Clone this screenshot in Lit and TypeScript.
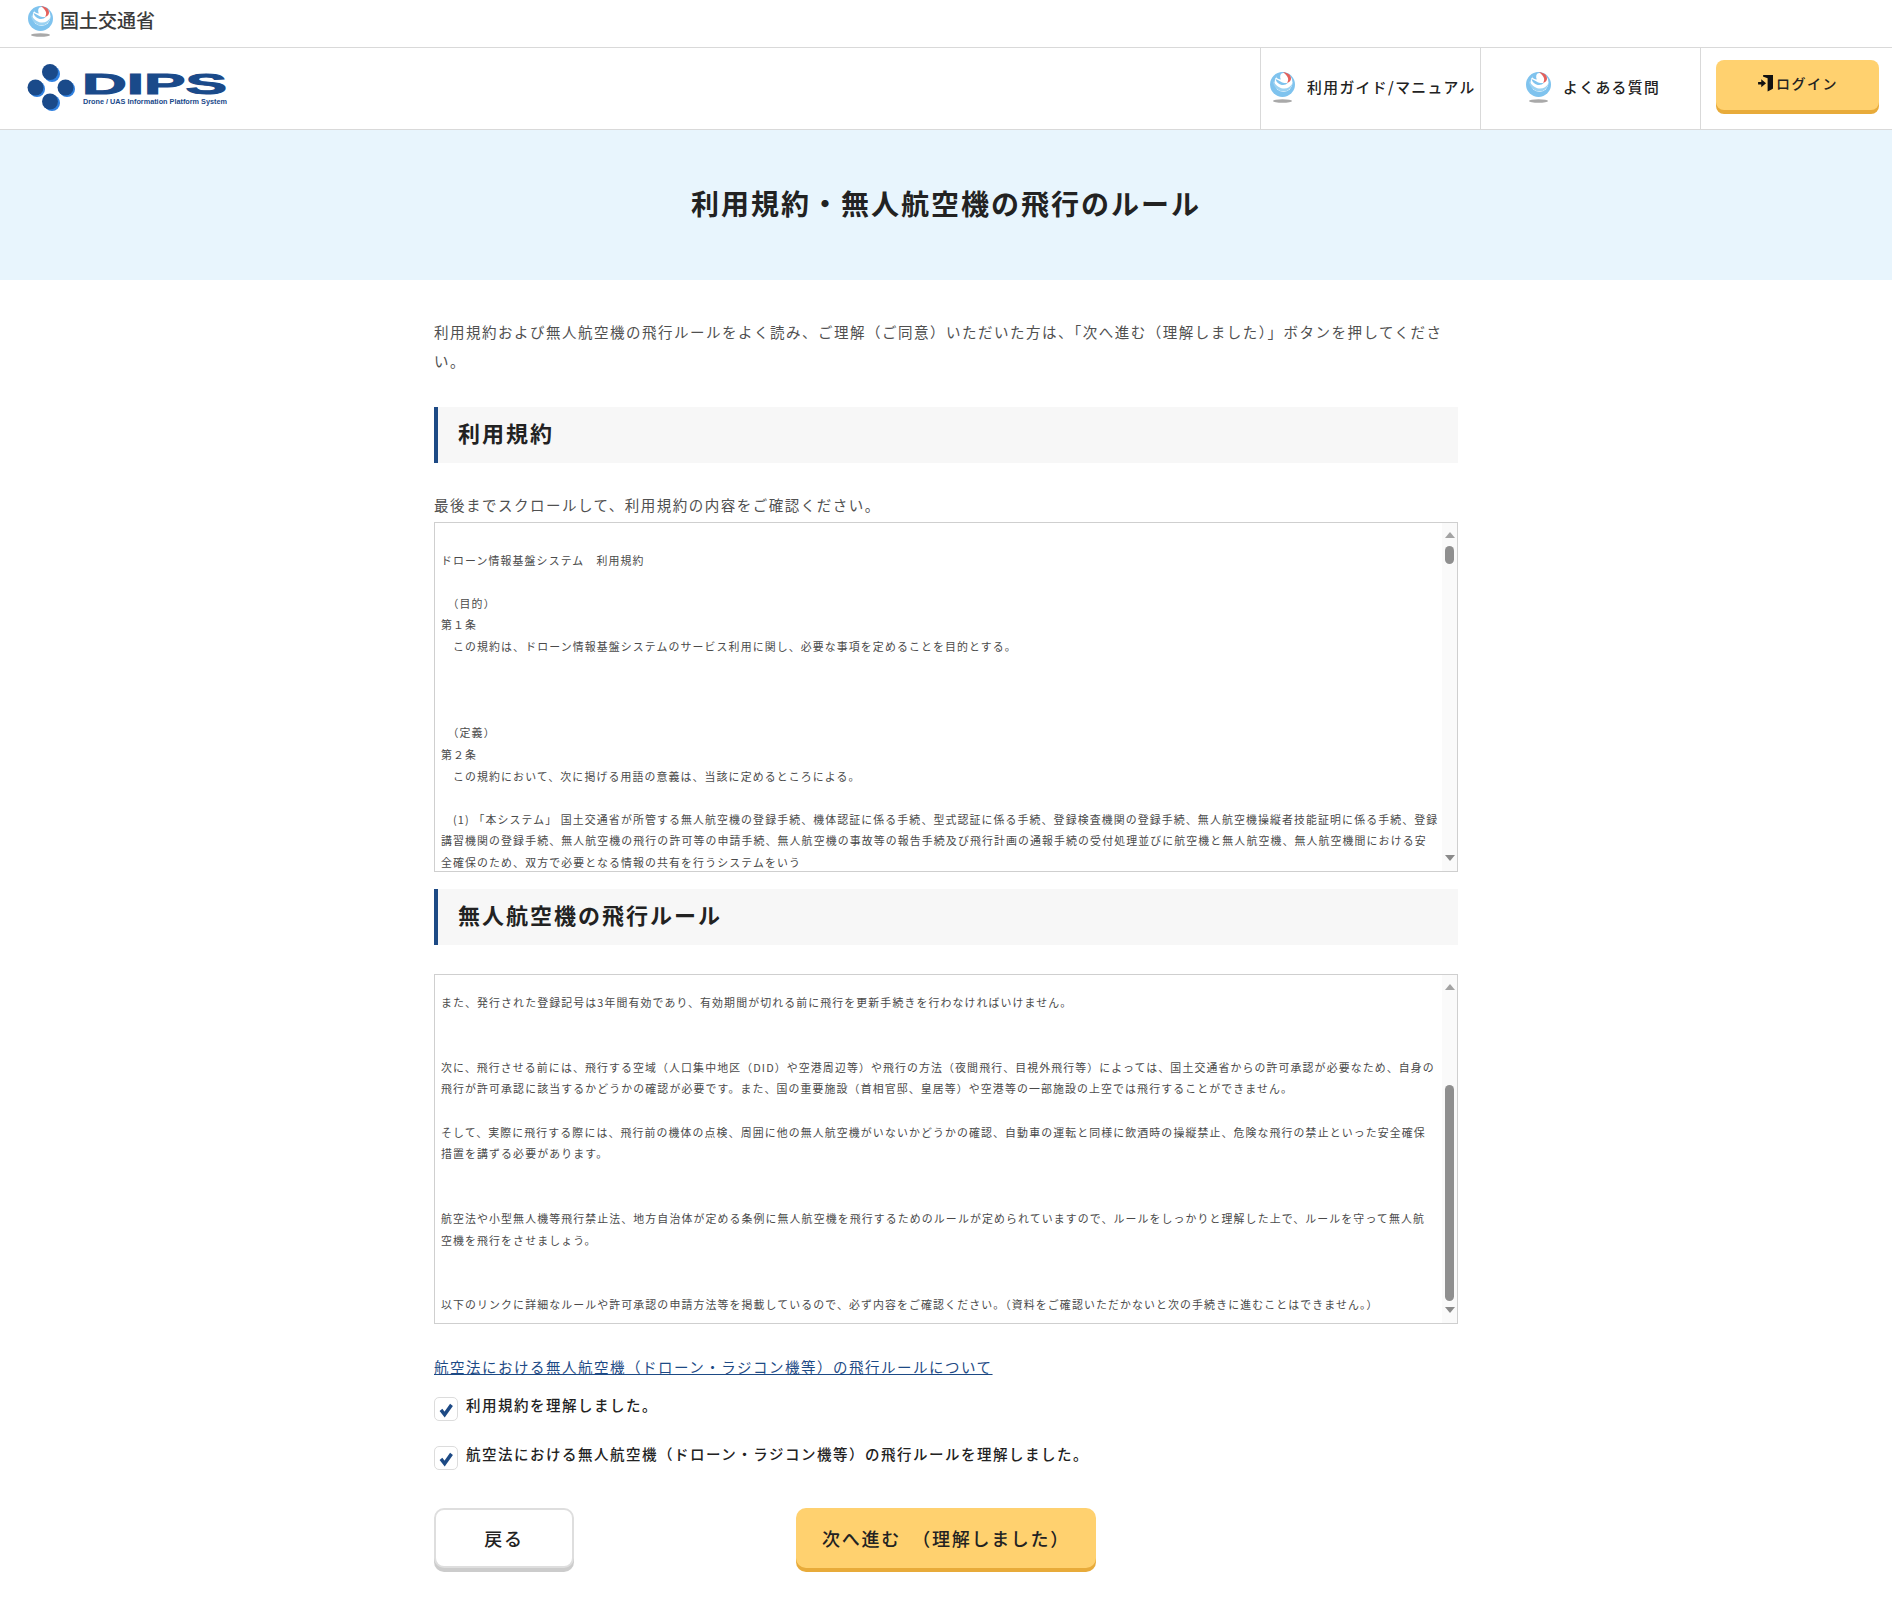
import { LitElement, html, css, svg } from "lit";
import { customElement } from "lit/decorators.js";

const TERMS = [
  "",
  "ドローン情報基盤システム　利用規約",
  "",
  "　（目的）",
  "第１条",
  "　この規約は、ドローン情報基盤システムのサービス利用に関し、必要な事項を定めることを目的とする。",
  "",
  "",
  "",
  "　（定義）",
  "第２条",
  "　この規約において、次に掲げる用語の意義は、当該に定めるところによる。",
  "",
  "　(1) 「本システム」 国土交通省が所管する無人航空機の登録手続、機体認証に係る手続、型式認証に係る手続、登録検査機関の登録手続、無人航空機操縦者技能証明に係る手続、登録",
  "講習機関の登録手続、無人航空機の飛行の許可等の申請手続、無人航空機の事故等の報告手続及び飛行計画の通報手続の受付処理並びに航空機と無人航空機、無人航空機間における安",
  "全確保のため、双方で必要となる情報の共有を行うシステムをいう",
];

const RULES = [
  "また、発行された登録記号は3年間有効であり、有効期間が切れる前に飛行を更新手続きを行わなければいけません。",
  "",
  "",
  "次に、飛行させる前には、飛行する空域（人口集中地区（DID）や空港周辺等）や飛行の方法（夜間飛行、目視外飛行等）によっては、国土交通省からの許可承認が必要なため、自身の",
  "飛行が許可承認に該当するかどうかの確認が必要です。また、国の重要施設（首相官邸、皇居等）や空港等の一部施設の上空では飛行することができません。",
  "",
  "そして、実際に飛行する際には、飛行前の機体の点検、周囲に他の無人航空機がいないかどうかの確認、自動車の運転と同様に飲酒時の操縦禁止、危険な飛行の禁止といった安全確保",
  "措置を講ずる必要があります。",
  "",
  "",
  "航空法や小型無人機等飛行禁止法、地方自治体が定める条例に無人航空機を飛行するためのルールが定められていますので、ルールをしっかりと理解した上で、ルールを守って無人航",
  "空機を飛行をさせましょう。",
  "",
  "",
  "以下のリンクに詳細なルールや許可承認の申請方法等を掲載しているので、必ず内容をご確認ください。（資料をご確認いただかないと次の手続きに進むことはできません。）",
];

const mlit = () => html`<svg class="mlit" viewBox="0 0 27 31" aria-hidden="true">
  ${svg`
  <circle cx="13.5" cy="12.5" r="12.5" fill="#7fc3ee"/>
  <ellipse cx="14.5" cy="10.5" rx="9" ry="9.5" fill="#fff"/>
  <path d="M3.5 8C4.5 15.5 9.5 19.5 14.5 19.5C19 19.5 22.5 16 23.5 11.5C21.5 15 18 17 14 16.5C9.5 16 6 12.5 3.5 8Z" fill="#9bd2f2"/>
  <path d="M6.5 7C7.5 10.5 10.5 13 14 13C16 13 17.5 12.3 18.8 11C16 11.3 13.5 11 11.5 9.5C9.5 8.5 8 7.5 6.5 7Z" fill="#7fc3ee"/>
  <path d="M14 0.3C18 0.3 21.5 2.5 22 6C22.3 8.5 20.5 10.5 18 11C19.3 9.2 19.6 7 18.5 5C17.5 3.2 16 1.5 14 0.3Z" fill="#e4605c"/>
  <path d="M7 5C8 2.5 10.5 .8 13.5 .3C11.2 2.2 10.5 4.8 11.8 7.5C9.8 7.5 8 6.5 7 5Z" fill="#7fc3ee"/>
  <ellipse cx="13.5" cy="29" rx="9.5" ry="1.8" fill="#a9a9a9"/>
  `}
</svg>`;

const check = () => html`<span class="check"><svg viewBox="0 0 24 23" aria-hidden="true">
  ${svg`<path d="M6.5 12.5L10.5 17.5L18 7" fill="none" stroke="#1d4a85" stroke-width="3.8"/>`}
</svg></span>`;

const scrollbar = (top: number, height: number) => html`<div class="bar">
  <svg class="arrow up" viewBox="0 0 10 6">${svg`<path d="M5 0L10 6H0Z" fill="#a3a3a3"/>`}</svg>
  <span class="thumb" style="top:${top}px;height:${height}px"></span>
  <svg class="arrow down" viewBox="0 0 10 6">${svg`<path d="M0 0H10L5 6Z" fill="#8a8a8a"/>`}</svg>
</div>`;

@customElement("app-root")
export class AppRoot extends LitElement {
  static styles = css`
    :host {
      display: block;
      font-family: "Noto Sans CJK JP", sans-serif;
      color: #444;
      background: #fff;
      height: 1616px;
      overflow: hidden;
    }
    .mlit { display: block; width: 27px; height: 31px; flex: none; }
    .ministry {
      height: 47px;
      border-bottom: 1px solid #d9d9d9;
      display: flex;
      align-items: flex-start;
      padding-left: 27px;
      gap: 6px;
    }
    .ministry .mlit { margin-top: 6px; }
    .ministry span {
      font-size: 19px;
      line-height: 40px;
      color: #3a3a3a;
      font-weight: 500;
    }
    .header {
      height: 81px;
      border-bottom: 1px solid #d9d9d9;
      display: flex;
      align-items: stretch;
    }
    .logo { display: block; width: 240px; height: 81px; margin-left: 20px; flex: none; }
    .nav { margin-left: auto; display: flex; align-items: stretch; }
    .nav-item {
      width: 220px;
      box-sizing: border-box;
      border-left: 1px solid #d9d9d9;
      display: flex;
      align-items: center;
      font-size: 14.8px;
      letter-spacing: 1.4px;
      font-weight: 500;
      color: #222;
      white-space: nowrap;
    }
    .nav-item.a { padding-left: 8px; gap: 11px; }
    .nav-item.b { padding-left: 44px; gap: 11px; }
    .nav-item .mlit { margin-top: -2px; }
    .nav-item span { margin-top: -5px; }
    .login-cell {
      width: 192px;
      border-left: 1px solid #d9d9d9;
      box-sizing: border-box;
      padding: 12px 13px 0 15px;
    }
    .login {
      height: 50px;
      border-radius: 8px;
      background: #ffd16f;
      box-shadow: 0 4px 0 #e8ab3a;
      display: flex;
      align-items: center;
      justify-content: center;
      gap: 2px;
      font-size: 14px;
      letter-spacing: 1.5px;
      font-weight: 500;
      color: #222;
      padding: 0 0 4px 0;
      box-sizing: border-box;
    }
    .login svg { width: 17px; height: 18px; display: block; }
    .hero {
      height: 150px;
      background: #e8f5fd;
      display: flex;
      align-items: center;
      justify-content: center;
    }
    .hero h1 {
      margin: 0 0 4px;
      font-size: 28px;
      letter-spacing: 2px;
      font-weight: 700;
      color: #222;
    }
    .main { width: 1024px; margin: 0 auto; }
    .p {
      margin: 0;
      font-size: 14.5px;
      letter-spacing: 1.5px;
      line-height: 29px;
      color: #505050;
    }
    .intro { padding-top: 37px; }
    .sec {
      height: 56px;
      box-sizing: border-box;
      border-left: 4px solid #1d4a85;
      background: #f7f7f7;
      padding: 0 0 7px 20px;
      display: flex;
      align-items: center;
      margin: 0;
      font-size: 22px;
      letter-spacing: 2px;
      font-weight: 700;
      color: #222;
    }
    .sec.first { margin-top: 32px; }
    .sec.second { margin-top: 17px; }
    .note { margin-top: 27px; margin-bottom: 3px; }
    .box {
      position: relative;
      height: 350px;
      box-sizing: border-box;
      border: 1px solid #cfcfcf;
      overflow: hidden;
      padding: 5px 0 0 6px;
    }
    .box.rules { margin-top: 29px; padding-top: 17px; }
    .line {
      height: 21.6px;
      line-height: 21.6px;
      font-size: 10.9px;
      letter-spacing: 1.13px;
      white-space: pre;
      color: #4a4a4a;
    }
    .bar {
      position: absolute;
      top: 0;
      right: 0;
      bottom: 0;
      width: 15px;
      background: #fafafa;
    }
    .arrow { position: absolute; left: 2.5px; width: 10px; height: 6px; display: block; }
    .arrow.up { top: 9px; }
    .arrow.down { bottom: 10px; }
    .thumb {
      position: absolute;
      left: 3px;
      width: 9px;
      border-radius: 5px;
      background: #8f8f8f;
    }
    .link {
      display: block;
      margin-top: 28px;
      font-size: 14.5px;
      letter-spacing: 1.5px;
      line-height: 29px;
      color: #1d4a85;
      text-decoration: underline;
    }
    .opts { margin-top: 16px; display: flex; flex-direction: column; gap: 25px; }
    .opt {
      display: flex;
      align-items: flex-start;
      gap: 8px;
      height: 24px;
      font-size: 14.5px;
      letter-spacing: 1.5px;
      font-weight: 500;
      color: #222;
      line-height: 16px;
    }
    .check {
      width: 24px;
      height: 24px;
      box-sizing: border-box;
      border: 1px solid #dcdcdc;
      border-radius: 5px;
      background: #fff;
      flex: none;
      display: block;
    }
    .check svg { display: block; width: 22px; height: 22px; }
    .actions { margin-top: 38px; display: flex; gap: 222px; }
    .btn {
      height: 60px;
      border-radius: 10px;
      display: flex;
      align-items: center;
      justify-content: center;
      box-sizing: border-box;
      font-size: 18px;
      letter-spacing: 1.7px;
      font-weight: 500;
      color: #222;
      white-space: pre;
    }
    .back {
      width: 140px;
      background: #fff;
      border: 2px solid #dedede;
      box-shadow: 0 4px 0 #cccccc;
    }
    .next {
      width: 300px;
      background: #ffd16f;
      box-shadow: 0 4px 0 #e8ab3a;
    }
  `;

  render() {
    return html`
      <div class="ministry">${mlit()}<span>国土交通省</span></div>
      <header class="header">
        <svg class="logo" viewBox="0 0 240 81" role="img" aria-label="DIPS">
          ${svg`
          <circle cx="32" cy="26" r="8" fill="#2f80e0"/>
          <circle cx="17" cy="41" r="8" fill="#2f80e0"/>
          <circle cx="47" cy="41" r="8" fill="#2f80e0"/>
          <circle cx="32" cy="55" r="8" fill="#2f80e0"/>
          <circle cx="30" cy="24" r="8" fill="#1a4a8a"/>
          <circle cx="15.5" cy="39.5" r="8" fill="#1a4a8a"/>
          <circle cx="45.5" cy="39.5" r="8" fill="#1a4a8a"/>
          <circle cx="30" cy="53.5" r="8" fill="#1a4a8a"/>
          <text x="62" y="46" font-family="Liberation Sans" font-weight="700" font-size="30" fill="#1a4a8a" stroke="#1a4a8a" stroke-width="1" textLength="145" lengthAdjust="spacingAndGlyphs">DIPS</text>
          <text x="63" y="56" font-family="Liberation Sans" font-weight="700" font-size="6.6" fill="#1a4a8a" textLength="144" lengthAdjust="spacingAndGlyphs">Drone / UAS Information Platform System</text>
          `}
        </svg>
        <nav class="nav">
          <div class="nav-item a">${mlit()}<span>利用ガイド/マニュアル</span></div>
          <div class="nav-item b">${mlit()}<span>よくある質問</span></div>
          <div class="login-cell">
            <div class="login">
              <svg viewBox="0 0 16 17" aria-hidden="true">
                ${svg`
                <path d="M6 1H15V14L10 16.5V4L6 2.5Z" fill="#111"/>
                <path d="M6 1H15V13H13.5V2.5H6Z" fill="#111"/>
                <path d="M1 7.5H4V5L8.5 8.8L4 12.5V10H1Z" fill="#111"/>
                `}
              </svg>
              <span>ログイン</span>
            </div>
          </div>
        </nav>
      </header>
      <section class="hero"><h1>利用規約・無人航空機の飛行のルール</h1></section>
      <main class="main">
        <p class="p intro">利用規約および無人航空機の飛行ルールをよく読み、ご理解（ご同意）いただいた方は、「次へ進む（理解しました）」ボタンを押してくださ<br />い。</p>
        <h2 class="sec first">利用規約</h2>
        <p class="p note">最後までスクロールして、利用規約の内容をご確認ください。</p>
        <div class="box">
          ${TERMS.map((l) => html`<div class="line">${l}</div>`)}
          ${scrollbar(23, 18)}
        </div>
        <h2 class="sec second">無人航空機の飛行ルール</h2>
        <div class="box rules">
          ${RULES.map((l) => html`<div class="line">${l}</div>`)}
          ${scrollbar(110, 216)}
        </div>
        <a class="link">航空法における無人航空機（ドローン・ラジコン機等）の飛行ルールについて</a>
        <div class="opts">
          <label class="opt">${check()}<span>利用規約を理解しました。</span></label>
          <label class="opt">${check()}<span>航空法における無人航空機（ドローン・ラジコン機等）の飛行ルールを理解しました。</span></label>
        </div>
        <div class="actions">
          <div class="btn back">戻る</div>
          <div class="btn next">次へ進む  （理解しました）</div>
        </div>
      </main>
    `;
  }
}
